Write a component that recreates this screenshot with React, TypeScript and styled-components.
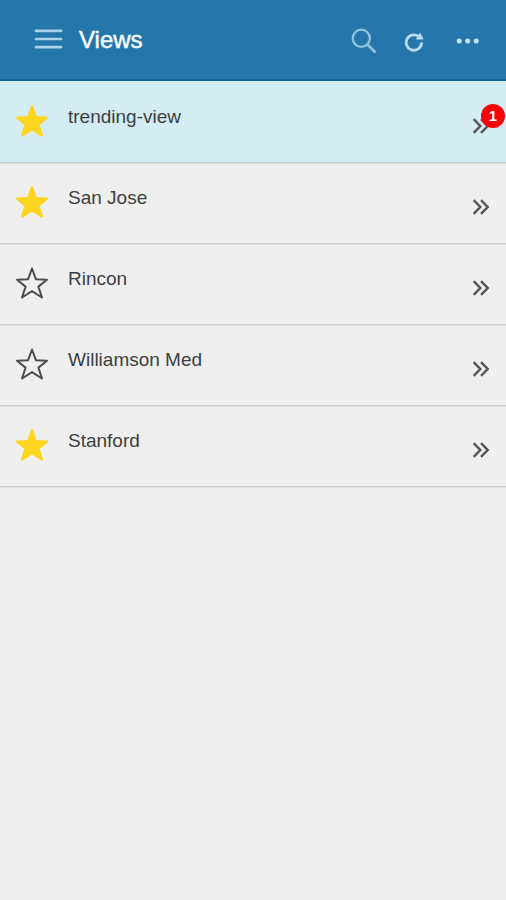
import React from "react";
import styled, { createGlobalStyle } from "styled-components";

const GlobalStyle = createGlobalStyle`
  *, *::before, *::after { box-sizing: border-box; }
  body {
    margin: 0;
    background: #efefef;
    font-family: "Liberation Sans", Arial, sans-serif;
  }
`;

const Screen = styled.div`
  min-height: 100vh;
  background: #efefef;
`;

const Header = styled.header`
  display: flex;
  align-items: center;
  height: 81px;
  padding: 0 26px 1px 34px;
  background: #2577ab;
  border-bottom: 2px solid #126a9c;
`;

const Title = styled.h1`
  flex: 1;
  margin: 1px 0 0 16px;
  color: #f4fbff;
  font-size: 24px;
  line-height: 28px;
  font-weight: 400;
  -webkit-text-stroke: 0.5px #f4fbff;
`;

const IconButton = styled.button<{ $gap?: number; $drop?: number }>`
  display: flex;
  margin: ${(p) => p.$drop ?? 0}px 0 0 ${(p) => p.$gap ?? 0}px;
  padding: 0;
  border: 0;
  background: none;
`;

const List = styled.ul`
  margin: 0;
  padding: 0;
  list-style: none;
`;

const Row = styled.li<{ $active: boolean }>`
  display: flex;
  align-items: flex-start;
  height: 81px;
  padding: 23px 16px 0 15px;
  background: ${(p) => (p.$active ? "#d4ecf4" : "transparent")};
  box-shadow: 0 1px 0 #c9cbcc, 0 2px 0 #dedede;
`;

const Name = styled.span`
  flex: 1;
  margin: 2px 0 0 19px;
  color: #3c3f41;
  font-size: 19px;
  line-height: 22px;
`;

const Open = styled.span`
  position: relative;
  display: flex;
  margin-top: 14px;
`;

const Badge = styled.span`
  position: absolute;
  left: 9px;
  top: -14px;
  width: 24px;
  height: 24px;
  border-radius: 50%;
  background: #fb0007;
  color: #ffffff;
  font-size: 15px;
  line-height: 24px;
  font-weight: 700;
  text-align: center;
`;

function Star({ filled }: { filled: boolean }) {
  return (
    <svg width="34" height="34" viewBox="0 0 34 34">
      <path
        d="M17 2.5 20.9 13.2 32 13.7 23.4 20.6 27 31.5 17 25.2 7 31.5 10.6 20.6 2 13.7 13.1 13.2Z"
        fill={filled ? "#ffd51f" : "none"}
        stroke={filled ? "#ffd51f" : "#4d4d4d"}
        strokeWidth={filled ? 2.2 : 2}
        strokeLinejoin="round"
      />
    </svg>
  );
}

function Chevrons() {
  return (
    <svg width="18" height="16" viewBox="0 0 18 16" fill="none" stroke="#555555" strokeWidth="2.4">
      <path d="M1.7 1.2 8.3 8 1.7 14.8M9 1.2 15.7 8 9 14.8" />
    </svg>
  );
}

const views = [
  { name: "trending-view", starred: true, count: 1 },
  { name: "San Jose", starred: true, count: 0 },
  { name: "Rincon", starred: false, count: 0 },
  { name: "Williamson Med", starred: false, count: 0 },
  { name: "Stanford", starred: true, count: 0 },
];

export default function App() {
  return (
    <Screen>
      <GlobalStyle />
      <Header>
        <IconButton aria-label="Menu">
          <svg width="29" height="20" viewBox="0 0 29 20" stroke="#a9d0e8" strokeWidth="2.7" strokeLinecap="round">
            <path d="M2 1.8H27M2 10H27M2 18.2H27" />
          </svg>
        </IconButton>
        <Title>Views</Title>
        <IconButton aria-label="Search" $drop={3}>
          <svg width="26" height="26" viewBox="0 0 26 26" fill="none" stroke="#92c3e2" strokeWidth="2.2">
            <circle cx="10.3" cy="10.3" r="8.6" />
            <path d="M16.5 16.5 24.5 24.5" strokeWidth="2.6" />
          </svg>
        </IconButton>
        <IconButton aria-label="Refresh" $gap={27} $drop={5}>
          <svg width="21" height="20" viewBox="0 0 21 20" fill="none" stroke="#b8dbf0" strokeWidth="2.8">
            <path d="M14.3 4.2A7.7 7.7 0 1 0 17.6 10.5" />
            <path d="M16.2 0.4 19.6 7.6 11.6 7.6Z" fill="#b8dbf0" stroke="none" />
          </svg>
        </IconButton>
        <IconButton aria-label="More" $gap={31} $drop={3}>
          <svg width="24" height="6" viewBox="0 0 24 6" fill="#c6e5f7">
            <circle cx="3.2" cy="3" r="2.5" />
            <circle cx="11.7" cy="3" r="2.5" />
            <circle cx="20.2" cy="3" r="2.5" />
          </svg>
        </IconButton>
      </Header>
      <List>
        {views.map((view, i) => (
          <Row key={view.name} $active={i === 0}>
            <Star filled={view.starred} />
            <Name>{view.name}</Name>
            <Open>
              <Chevrons />
              {view.count > 0 && <Badge>{view.count}</Badge>}
            </Open>
          </Row>
        ))}
      </List>
    </Screen>
  );
}
